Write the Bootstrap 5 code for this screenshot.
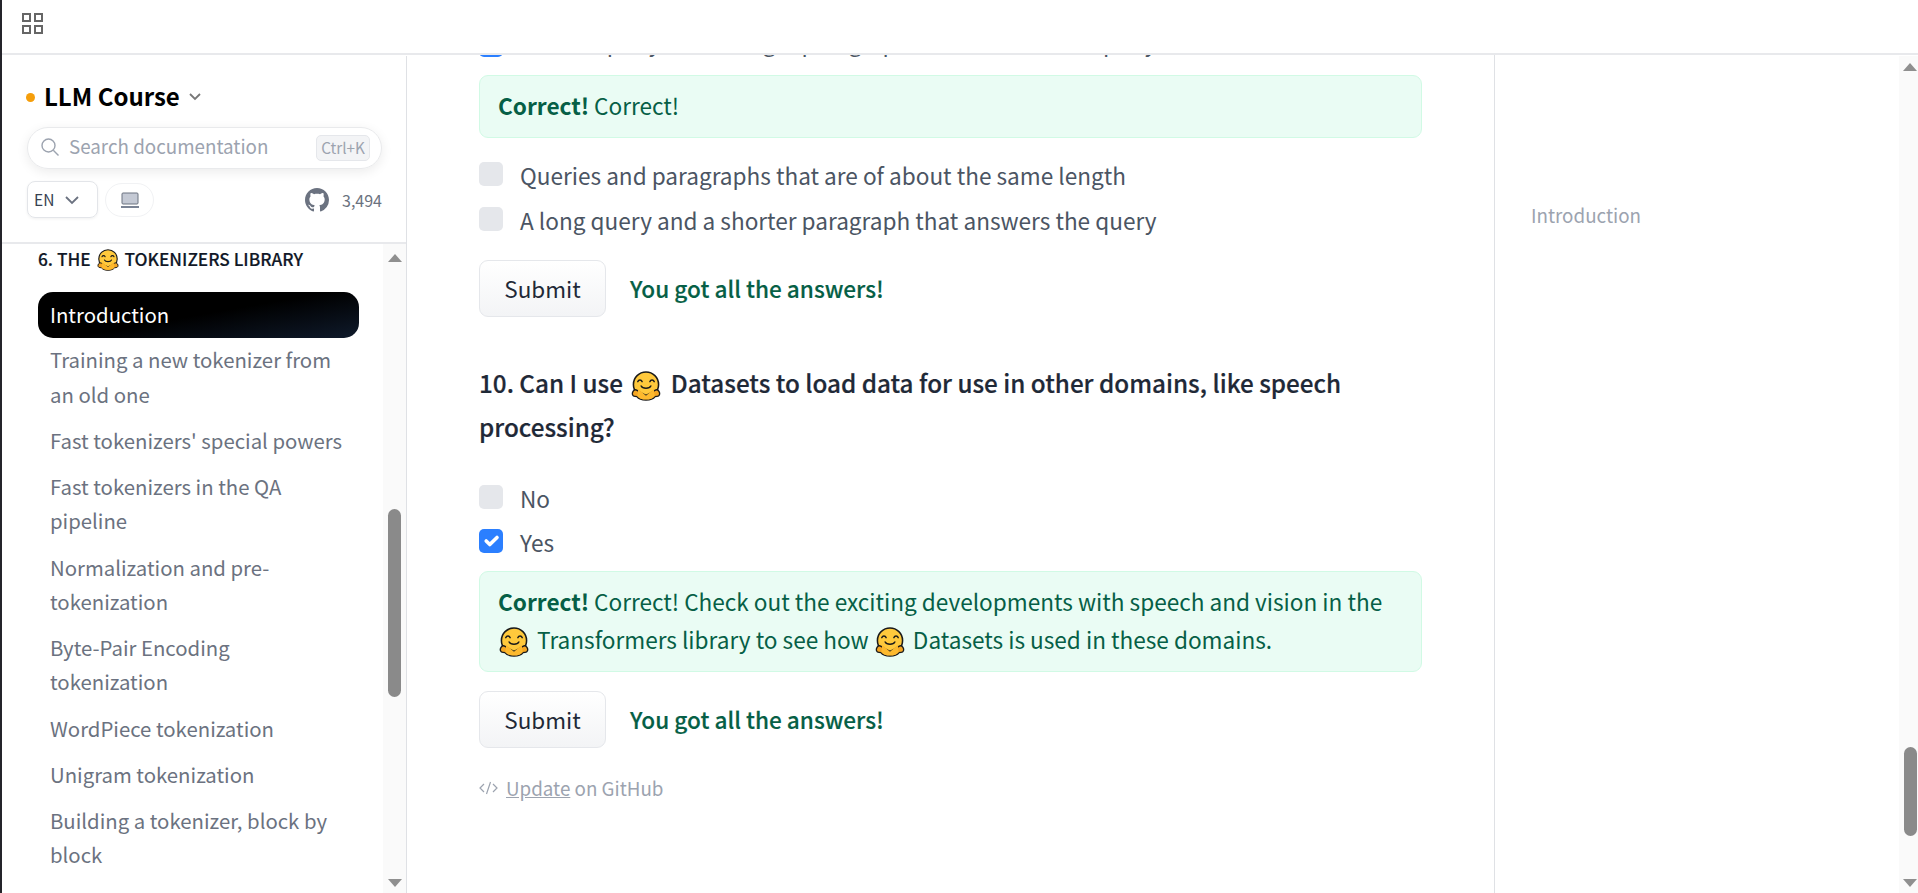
<!DOCTYPE html>
<html lang="en">
<head>
<meta charset="utf-8">
<title>LLM Course</title>
<link href="https://cdn.jsdelivr.net/npm/bootstrap@5.3.0/dist/css/bootstrap.min.css" rel="stylesheet">
<style>
html,body{height:100%;overflow:hidden}
body{font-family:"Noto Sans CJK SC","Liberation Sans",sans-serif;font-size:20px;color:#4b5563;background:#fff;border-left:2px solid #24242a}
.top-strip{height:55px;margin-bottom:1px;border-bottom:2px solid #e8e9ec;padding:13px 0 0 20px}
.grid-ico{width:21px;height:21px;color:#666}
.work{height:837px}
.side{width:405px;border-right:1px solid #dfe1e5}
.side-head{height:188px;border-bottom:2px solid #e8e9ec;padding:0 24px 0 25px}
.title-row{padding-top:23px;height:68px}
.dot{width:9px;height:9px;border-radius:50%;background:#f59e0b;margin:14px 9px 0 -1px}
.course-name{font-size:24px;font-weight:700;color:#000;line-height:34px}
.chev-ttl{margin:9px 0 0 7px}
.search-pill{height:42px;border:1px solid #e9eaec;border-radius:21px;box-shadow:0 3px 12px rgba(0,0,0,.08);padding:0 11px 3px 13px;margin-top:3px;color:#9ca3af}
.search-txt{font-size:18.8px;margin-left:10px}
.kbd-box{font-size:15.300px;height:26px;width:54px;background:#f3f4f6;border:1px solid #e5e7eb;border-radius:5px;margin:1px 0 -1px auto}
.tools-row{margin-top:12px}
.lang-box{width:71px;height:37px;border:1px solid #e3e5e9;border-radius:8px;box-shadow:0 1px 3px rgba(0,0,0,.06);font-size:15.500px;color:#374151;padding-left:6px;gap:11px}
.mode-box{width:49px;height:34px;border:1px solid #f1f2f4;border-radius:17px;margin-left:7px}
.stars{font-size:16px;color:#6b7280;margin-left:13px}
.side-body{height:649px}
.side-list{width:381px;padding:0 24px 0 36px;overflow:hidden}
.chapter-h{font-size:17.300px;font-weight:500;color:#111827;line-height:30px;margin:0 0 18px 0;text-transform:uppercase;white-space:nowrap;-webkit-text-stroke:.15px currentColor}
.chap-link{display:block;padding:4px 12px 8px;line-height:34.250px;font-size:20.350px;color:#6b7280;text-decoration:none}
.chap-link.on{color:#fff;padding:5px 12px 7px;border-radius:15px;background:linear-gradient(170deg,#000 50%,#0f1a2b 100%)}
.sb{background:#fafafa;flex:0 0 auto;height:100%}
.sb-side{width:23px;padding:0 5px}
.sb-main{width:19px;padding:0 0 0 4px}
.sb-up,.sb-down{width:0;height:0;border-left:7.5px solid transparent;border-right:7.5px solid transparent}
.sb-up{border-bottom:8px solid #8f8f8f}
.sb-down{border-top:8px solid #8f8f8f}
.thumb{background:#8a8a8a;border-radius:7px;width:13px}
.side .thumb{height:188px;margin-top:247px}
.side .sb-up{margin-top:10px}
.side .sb-down{margin-top:182px}
.sb-main .thumb{height:89px;margin:676px 0 0 1px}
.sb-main .sb-up{margin-top:7px}
.sb-main .sb-down{margin-top:43px}
.main-col{width:1088px;margin-top:-1px;border-right:1px solid #dfe1e5;overflow:hidden;padding:0 0 0 72px}
.flow{width:943px;margin-top:-32px;font-size:22.600px;line-height:38px}
.opt{height:45px;margin:0}
.opt-text{margin-left:17px;color:#4b5563;line-height:45px;padding-top:1px;white-space:nowrap}
.opt-text.scrolled{padding-top:0;margin-top:-3px}
.form-check-input.q{width:24px;height:24px;margin:10px 0 0;background-color:#e5e7eb;border:0;border-radius:5px;flex:0 0 auto}
.form-check-input.q:checked{background-color:#2b7fff}
.good{background:#eafcf4;border:1px solid #d1fae5;border-radius:9px;color:#065f46;padding:11px 18px 12px;margin:7px 0 0;font-size:22.600px;line-height:38px}
.good b{font-weight:700}
.sub-btn{width:127px;height:57px;border:1px solid #e5e7eb;border-radius:9px;background:linear-gradient(#fff,#f3f4f6);font-size:22.500px;color:#1f2937;padding:0}
.got{font-weight:500;color:#065f46;font-size:22.600px;margin-left:24px;-webkit-text-stroke:.15px currentColor}
.sub-a{margin-top:18px}
.sub-b{margin-top:19px}
.opts-a{margin-top:14px}
.opt-tight{margin-top:-1px}
.q-title{font-size:24.250px;font-weight:500;line-height:44px;color:#1f2937;margin:44px 0 26px;-webkit-text-stroke:.2px currentColor}
.hug{display:inline-block;vertical-align:-8px;width:30px;height:30px;margin:0 3px 0 1px}
.q-title .hug{margin:0 4px 0 3px}
.hug.sm{width:22px;height:22px;vertical-align:-5px;margin:0 2px}
.upd{font-size:18.800px;color:#9ca3af;margin-top:23px;line-height:34px}
.upd a{color:#9ca3af}
.toc{flex:1;padding:144px 0 0 36px;font-size:18.800px;color:#9ca3af;line-height:30px}
</style>
</head>
<body class="d-flex flex-column">
<svg width="0" height="0" class="position-absolute">
<defs>
<symbol id="hugface" viewBox="1 0 30 31">
<circle cx="16" cy="14" r="13" fill="#ffc93c" stroke="#1a1a1a" stroke-width="1.6"/>
<path d="M2.600 21c-1.600 2.500-.5 5 2 5.200l2 .2c1.700 2.300 5.500 3.600 9.400 3.600s7.700-1.300 9.400-3.600l2-.2c2.500-.2 3.600-2.700 2-5.200-1-1.500-3-1.700-4.200-1l-5.200 3.200-4 2-4-2-5.200-3.200c-1.200-.7-3.200-.5-4.200 1z" fill="#f5a623" stroke="#1a1a1a" stroke-width="1.400"/>
<path d="M8 18.500l8 7v4c-4 0-7-1.500-9-3.500zM24 18.500l-8 7v4c4 0 7-1.500 9-3.500z" fill="#fdb92e"/>
<path d="M7.500 11c1-2.200 3.500-2.200 4.500 0M20 11c1-2.200 3.500-2.200 4.500 0" fill="none" stroke="#1a1a1a" stroke-width="1.500" stroke-linecap="round"/>
<path d="M11 15.500c1.500 3 8.500 3 10 0" fill="none" stroke="#1a1a1a" stroke-width="1.500" stroke-linecap="round"/>
</symbol>
</defs>
</svg>

<header class="top-strip flex-shrink-0">
<svg class="grid-ico d-block" viewBox="0 0 21 21" fill="none" stroke="currentColor" stroke-width="2"><rect x="1" y="1" width="7" height="7"/><rect x="13" y="1" width="7" height="7"/><rect x="1" y="13" width="7" height="7"/><rect x="13" y="13" width="7" height="7"/></svg>
</header>

<div class="work d-flex">
<aside class="side d-flex flex-column flex-shrink-0">
<div class="side-head flex-shrink-0">
<div class="title-row d-flex align-items-start">
<span class="dot"></span>
<span class="course-name">LLM Course</span>
<svg class="chev-ttl" width="16" height="16" viewBox="0 0 16 16" fill="none" stroke="#777" stroke-width="1.800"><path d="M3 6l5 5 5-5"/></svg>
</div>
<div class="search-pill d-flex align-items-center">
<svg width="18" height="18" viewBox="0 0 18 18" fill="none" stroke="#9ca3af" stroke-width="1.400"><circle cx="7.500" cy="7.500" r="6.500"/><path d="M12.300 12.300L17.500 17.500"/></svg>
<span class="search-txt">Search documentation</span>
<span class="kbd-box d-flex align-items-center justify-content-center">Ctrl+K</span>
</div>
<div class="tools-row d-flex align-items-center">
<div class="lang-box d-flex align-items-center">EN
<svg width="14" height="14" viewBox="0 0 14 14" fill="none" stroke="#6b7280" stroke-width="1.800"><path d="M1 4l6 6 6-6"/></svg></div>
<div class="mode-box d-flex align-items-center justify-content-center">
<svg width="20" height="16" viewBox="0 0 20 16"><rect x="2" y="1" width="16" height="11" rx="1" fill="#c4c9d4" stroke="#6b7280" stroke-width="1"/><rect x="1" y="14" width="18" height="2" fill="#7a8394"/></svg></div>
<svg class="ms-auto" width="24" height="24" viewBox="0 0 16 16" fill="#6b7280"><path d="M8 0C3.580 0 0 3.580 0 8c0 3.540 2.290 6.530 5.470 7.590.4.070.55-.17.55-.38 0-.19-.010-.82-.010-1.490-2.010.37-2.530-.49-2.690-.94-.09-.23-.48-.94-.82-1.130-.28-.15-.68-.52-.010-.53.63-.010 1.080.58 1.230.82.72 1.210 1.870.87 2.330.66.070-.52.28-.87.51-1.070-1.780-.2-3.640-.89-3.640-3.950 0-.87.31-1.590.82-2.150-.08-.2-.36-1.020.08-2.120 0 0 .67-.21 2.200.82.64-.18 1.320-.27 2-.27s1.360.09 2 .27c1.530-1.040 2.200-.82 2.200-.82.44 1.100.16 1.920.08 2.120.51.56.82 1.270.82 2.150 0 3.070-1.870 3.750-3.650 3.950.29.25.54.73.54 1.480 0 1.070-.010 1.930-.010 2.200 0 .21.15.46.55.38A8.010 8.010 0 0016 8c0-4.420-3.580-8-8-8z"/></svg>
<span class="stars">3,494</span>
</div>
</div>
<div class="side-body d-flex">
<nav class="side-list flex-shrink-0">
<h6 class="chapter-h">6. The <svg class="hug sm"><use href="#hugface"/></svg> Tokenizers Library</h6>
<a class="chap-link on" href="#">Introduction</a>
<a class="chap-link" href="#">Training a new tokenizer from an old one</a>
<a class="chap-link" href="#">Fast tokenizers' special powers</a>
<a class="chap-link" href="#">Fast tokenizers in the QA pipeline</a>
<a class="chap-link" href="#">Normalization and pre-tokenization</a>
<a class="chap-link" href="#">Byte-Pair Encoding tokenization</a>
<a class="chap-link" href="#">WordPiece tokenization</a>
<a class="chap-link" href="#">Unigram tokenization</a>
<a class="chap-link" href="#">Building a tokenizer, block by block</a>
<a class="chap-link" href="#">Tokenizers, check!</a>
</nav>
<div class="sb sb-side d-flex flex-column">
<div class="sb-up"></div>
<div class="thumb"></div>
<div class="sb-down"></div>
</div>
</div>
</aside>

<main class="main-col flex-shrink-0">
<div class="flow">
<label class="opt d-flex align-items-start"><input class="form-check-input q" type="checkbox" checked><span class="opt-text scrolled">A short query and a longer paragraph that answers the query</span></label>
<p class="good"><b>Correct!</b> Correct!</p>
<div class="opts-a">
<label class="opt d-flex align-items-start"><input class="form-check-input q" type="checkbox"><span class="opt-text">Queries and paragraphs that are of about the same length</span></label>
<label class="opt d-flex align-items-start"><input class="form-check-input q" type="checkbox"><span class="opt-text">A long query and a shorter paragraph that answers the query</span></label>
</div>
<div class="sub-a d-flex align-items-center"><button class="btn sub-btn" type="button">Submit</button><span class="got">You got all the answers!</span></div>
<h3 class="q-title">10. Can I use <svg class="hug"><use href="#hugface"/></svg> Datasets to load data for use in other domains, like speech processing?</h3>
<label class="opt d-flex align-items-start"><input class="form-check-input q" type="checkbox"><span class="opt-text">No</span></label>
<label class="opt opt-tight d-flex align-items-start"><input class="form-check-input q" type="checkbox" checked><span class="opt-text">Yes</span></label>
<p class="good"><b>Correct!</b> Correct! Check out the exciting developments with speech and vision in the <svg class="hug"><use href="#hugface"/></svg> Transformers library to see how <svg class="hug"><use href="#hugface"/></svg> Datasets is used in these domains.</p>
<div class="sub-b d-flex align-items-center"><button class="btn sub-btn" type="button">Submit</button><span class="got">You got all the answers!</span></div>
<div class="upd d-flex align-items-center"><svg class="me-2" width="19" height="14" viewBox="0 0 19 14" fill="none" stroke="#9ca3af" stroke-width="1.200"><path d="M5 3L1 7l4 4M14 3l4 4-4 4M11.500 1L7.500 13"/></svg><span><a href="#">Update</a> on GitHub</span></div>
</div>
</main>

<div class="toc">Introduction</div>
<div class="sb sb-main d-flex flex-column">
<div class="sb-up"></div>
<div class="thumb"></div>
<div class="sb-down"></div>
</div>
</div>
<script src="https://cdn.jsdelivr.net/npm/bootstrap@5.3.0/dist/js/bootstrap.bundle.min.js"></script>
</body>
</html>
